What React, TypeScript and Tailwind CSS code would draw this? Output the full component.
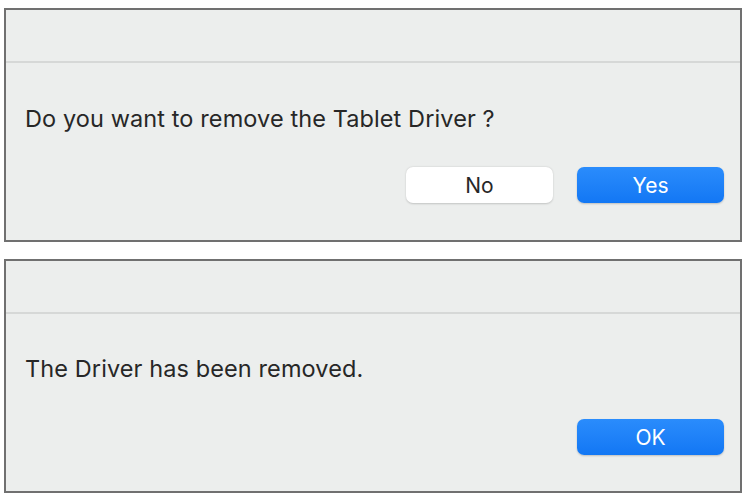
import React from "react";

type Btn = { label: string; primary?: boolean };

function Dialog({ message, buttons, textGap, buttonGap }: { message: string; buttons: Btn[]; textGap: string; buttonGap: string }) {
  return (
    <div className="w-[738px] h-[234px] border-2 border-[#707070] bg-[#eceeed] flex flex-col">
      <div className="h-[53px] border-b-2 border-[#d6d8d7] shrink-0" />
      <div className={`${textGap} pl-[19px] text-[23.5px] leading-[28px] text-[#272727] tracking-[0.1px]`}>{message}</div>
      <div className={`${buttonGap} flex justify-end gap-[24px] pr-[16px]`}>
        {buttons.map((b) =>
          b.primary ? (
            <button
              key={b.label}
              className="w-[147px] h-[36px] rounded-[7px] bg-gradient-to-b from-[#2a8cfc] to-[#1277f4] text-white text-[21px] leading-none shadow-[0_1px_2px_rgba(0,0,0,0.2)]"
            >
              {b.label}
            </button>
          ) : (
            <button
              key={b.label}
              className="w-[147px] h-[36px] rounded-[7px] bg-white text-[#272727] text-[21px] leading-none shadow-[0_0.5px_2px_rgba(0,0,0,0.18)]"
            >
              {b.label}
            </button>
          )
        )}
      </div>
    </div>
  );
}

export default function App() {
  return (
    <div className="w-[745px] h-[495px] bg-white pt-[8px] pl-[4px] flex flex-col gap-[17px] font-['Inter','Liberation_Sans',sans-serif]">
      <Dialog
        message="Do you want to remove the Tablet Driver ?"
        buttons={[{ label: "No" }, { label: "Yes", primary: true }]}
        textGap="mt-[42px]"
        buttonGap="mt-[34px]"
      />
      <Dialog
        message="The Driver has been removed."
        buttons={[{ label: "OK", primary: true }]}
        textGap="mt-[41px]"
        buttonGap="mt-[36px]"
      />
    </div>
  );
}
